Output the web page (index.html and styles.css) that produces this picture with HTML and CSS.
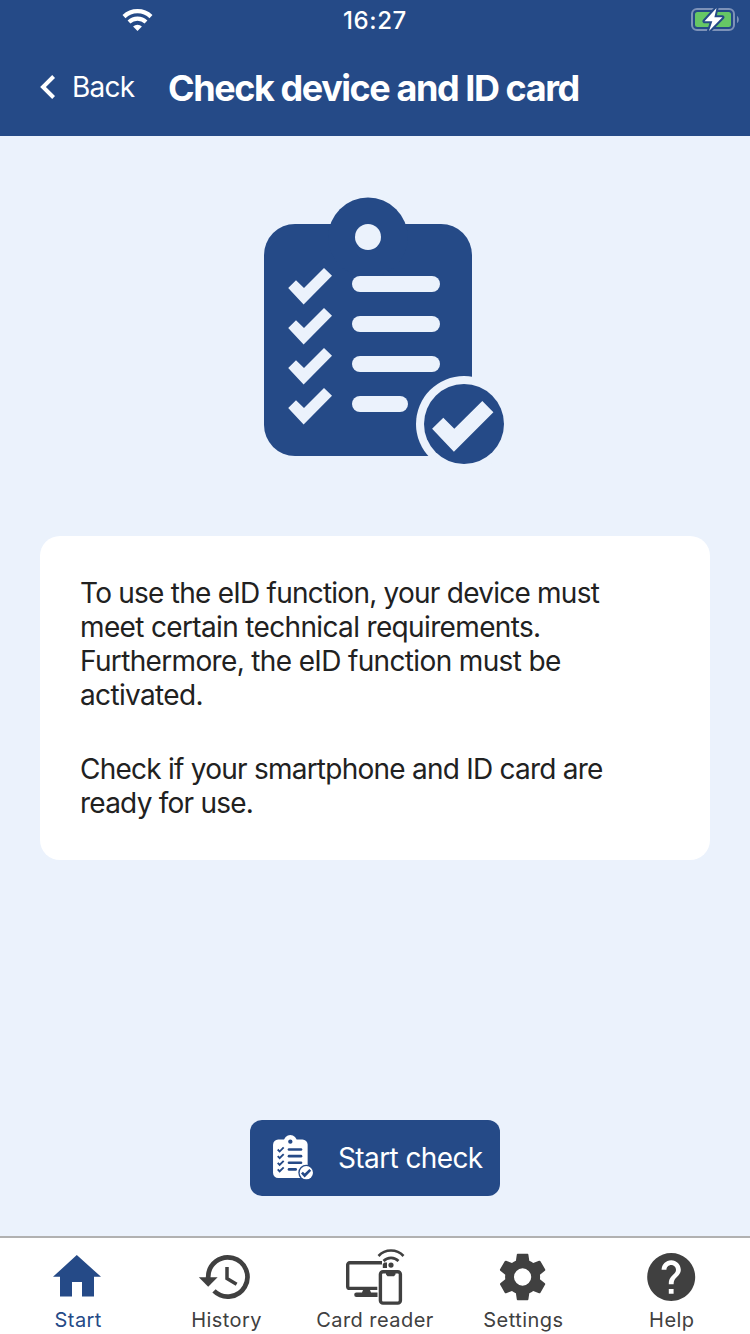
FILE: index.html
```html
<!DOCTYPE html>
<html lang="en">
<head>
<meta charset="utf-8">
<title>Check device and ID card</title>
<link rel="stylesheet" href="styles.css">
</head>
<body>
<svg class="sprite" width="0" height="0" aria-hidden="true">
  <symbol id="checklist" viewBox="264 197 240 268">
    <g fill="currentColor">
      <rect x="264" y="224" width="208" height="232" rx="31"/>
      <circle cx="368" cy="237.3" r="39.8"/>
    </g>
    <g fill="var(--cut)">
      <circle cx="368" cy="237" r="13"/>
      <path id="tick" d="M288.2 288l7.8-7.8 8 7.8 20-20 8 7.8-28.4 28.6z"/>
      <use href="#tick" y="40"/>
      <use href="#tick" y="80"/>
      <use href="#tick" y="120"/>
      <rect x="352" y="276" width="88" height="16" rx="8"/>
      <rect x="352" y="316" width="88" height="16" rx="8"/>
      <rect x="352" y="356" width="88" height="16" rx="8"/>
      <rect x="352" y="396" width="56" height="16" rx="8"/>
      <circle cx="464" cy="424" r="48"/>
    </g>
    <circle cx="464" cy="424" r="40" fill="currentColor"/>
    <path fill="var(--cut)" d="M432.1 428.8l11.2-11 11 11 28-27.8 11.1 11.3-39.5 39.5z"/>
  </symbol>
</svg>
<div class="screen">
  <header class="header">
    <div class="status">
      <svg class="wifi" width="32" height="24" viewBox="0 0 32 24" fill="none" stroke="#fff">
        <path d="M2 8.6a19.6 19.6 0 0 1 27 0" stroke-width="4.3"/>
        <path d="M7 14a12.4 12.4 0 0 1 17 0" stroke-width="4.1"/>
        <path d="M15.5 23l-4.4-4.4a6.4 6.4 0 0 1 8.8 0z" fill="#fff" stroke="none"/>
      </svg>
      <span class="time">16:27</span>
      <svg class="battery" width="50" height="26" viewBox="0 0 50 26">
        <rect x="2" y="2" width="42" height="21" rx="5" fill="none" stroke="#7d92b8" stroke-width="2"/>
        <rect x="5" y="5" width="36" height="15" rx="2.5" fill="#66c765"/>
        <path d="M47 9c2.4 1 2.4 6 0 7z" fill="#7d92b8"/>
        <path d="M26.5 1L14.5 14.2h7.8L19 24l13.4-13.7h-8z" fill="#fff" stroke="#254a87" stroke-width="4" stroke-linejoin="round" paint-order="stroke"/>
      </svg>
    </div>
    <div class="titlebar">
      <svg class="chevron" width="16" height="24" viewBox="0 0 16 24" fill="none" stroke="#fff" stroke-width="4"><path d="M13.6 1.5L3 12l10.6 10.5"/></svg>
      <span class="back">Back</span>
      <h1 class="title">Check device and ID card</h1>
    </div>
  </header>
  <main class="content">
    <svg class="hero"><use href="#checklist"/></svg>
    <section class="card">
      <p class="line l1"><span class="tight">To use the eID function, your device must</span><br>meet certain technical requirements.<br>Furthermore, the eID function must be<br>activated.</p>
      <p class="line tight">Check if your smartphone and ID card are<br>ready for use.</p>
    </section>
    <button class="action"><svg class="action-icon"><use href="#checklist"/></svg><span>Start check</span></button>
  </main>
  <nav class="tabs">
    <div class="tab active">
      <svg class="icon" viewBox="0 0 60 58"><path fill="currentColor" d="M24 48.6V34h10v14.6h12V28.8h7L28.8 7 5 28.8h7v19.8z"/></svg>
      <span>Start</span>
    </div>
    <div class="tab">
      <svg class="icon" viewBox="0 0 60 58" fill="none" stroke="currentColor"><path d="M11.2 30v-1a19.6 19.6 0 1 1 5.8 13.9" stroke-width="4.7"/><path d="M30 19v11.6l9.6 5.6" stroke-width="3.5"/><path d="M1.8 29.2h18.8l-9.4 9.6z" fill="currentColor" stroke="none"/></svg>
      <span>History</span>
    </div>
    <div class="tab">
      <svg class="icon" viewBox="0 0 60 58" fill="none" stroke="currentColor">
        <path d="M37 14.8H4.7a2 2 0 0 0-2 2v21.6a2 2 0 0 0 2 2H32.3" stroke-width="3.4"/>
        <path d="M18 42h7l1 2.5h6.5v4.4H11.4a2.2 2.2 0 0 1 0-4.4H17z" fill="currentColor" stroke="none"/>
        <rect x="35.4" y="23.7" width="20" height="31.4" rx="2.6" stroke-width="3.4"/>
        <path d="M41 24h9.5v2.5l-1.5 1.8h-6.5L41 26.5zM37.8 16l1.6-1.4H42V20h-4.2z" fill="currentColor" stroke="none"/>
        <circle cx="46" cy="17.1" r="2.6" fill="currentColor" stroke="none"/>
        <path d="M33.5 8a17 17 0 0 1 25 0M38.5 13a10.5 10.5 0 0 1 15 0" stroke-width="2.6"/>
      </svg>
      <span>Card reader</span>
    </div>
    <div class="tab">
      <svg class="icon" viewBox="0 0 60 58"><path fill="currentColor" transform="translate(1.6 1) scale(2.333)" d="M19.43 12.98c.04-.32.07-.64.07-.98s-.03-.66-.07-.98l2.11-1.65c.19-.15.24-.42.12-.64l-2-3.46c-.12-.22-.39-.3-.61-.22l-2.49 1c-.52-.4-1.08-.73-1.69-.98l-.38-2.65C14.46 2.18 14.25 2 14 2h-4c-.25 0-.46.18-.49.42l-.38 2.65c-.61.25-1.17.59-1.69.98l-2.49-1c-.23-.09-.49 0-.61.22l-2 3.46c-.13.22-.07.49.12.64l2.11 1.65c-.04.32-.07.65-.07.98s.03.66.07.98l-2.11 1.65c-.19.15-.24.42-.12.64l2 3.46c.12.22.39.3.61.22l2.49-1c.52.4 1.08.73 1.69.98l.38 2.65c.03.24.24.42.49.42h4c.25 0 .46-.18.49-.42l.38-2.65c.61-.25 1.17-.59 1.69-.98l2.49 1c.23.09.49 0 .61-.22l2-3.46c.12-.22.07-.49-.12-.64l-2.11-1.65zM12 15.7a3.7 3.7 0 1 1 0-7.4 3.7 3.7 0 0 1 0 7.4z"/></svg>
      <span>Settings</span>
    </div>
    <div class="tab">
      <svg class="icon" viewBox="0 0 60 58"><path fill="currentColor" transform="translate(.4 .2) scale(2.4)" d="M12 2C6.48 2 2 6.48 2 12s4.48 10 10 10 10-4.48 10-10S17.52 2 12 2zm1 17h-2v-2h2v2zm2.07-7.75l-.9.92C13.45 12.9 13 13.5 13 15h-2v-.5c0-1.1.45-2.1 1.17-2.83l1.24-1.26c.37-.36.59-.86.59-1.41 0-1.1-.9-2-2-2s-2 .9-2 2H8c0-2.21 1.79-4 4-4s4 1.79 4 4c0 .88-.36 1.68-.93 2.25z"/></svg>
      <span>Help</span>
    </div>
  </nav>
</div>
</body>
</html>
```
FILE: styles.css
```css
* { box-sizing: border-box; }
body { margin: 0; font-family: Inter, sans-serif; font-weight: 400; }
.sprite { display: block; }
.screen { width: 750px; height: 1334px; display: flex; flex-direction: column; background: #ebf2fc; overflow: hidden; }
.header { height: 136px; background: #254a87; color: #fff; }
.status { height: 40px; display: grid; grid-template-columns: 1fr auto 1fr; align-items: center; }
.wifi { margin-left: 122px; }
.time { font-size: 24px; font-weight: 500; letter-spacing: 0.6px; line-height: 38px; padding-top: 2px; }
.battery { justify-self: end; margin-right: 10px; }
.titlebar { height: 94px; display: flex; align-items: center; padding-left: 40px; white-space: nowrap; }
.back { width: 96px; padding-left: 16px; font-size: 28px; letter-spacing: -0.8px; }
.title { margin: 0 0 0 16px; font-size: 36px; font-weight: 700; letter-spacing: -1.43px; padding-top: 1px; }
.content { flex: 1; display: flex; flex-direction: column; align-items: center; color: #212121; }
.hero { width: 240px; height: 268px; margin: 61px 0 71px 18px; color: #254a87; --cut: #ebf2fc; flex: none; }
.card { width: 670px; height: 324px; padding: 40px; border-radius: 20px; background: #fff; }
.line { margin: 0; font-size: 28px; line-height: 34px; letter-spacing: -0.65px; white-space: nowrap; }
.tight, .line.tight { letter-spacing: -0.76px; }
.l1 { margin-bottom: 40px; }
.action { margin-top: auto; margin-bottom: 40px; width: 250px; height: 76px; padding: 0 0 0 23px; display: flex; align-items: center; gap: 25px; border: 0; border-radius: 12px; background: #254a87; color: #fff; font: inherit; font-size: 28px; letter-spacing: -0.6px; white-space: nowrap; }
.action-icon { width: 40px; height: 44.6px; flex: none; margin-top: -1px; --cut: #254a87; }
.tabs { height: 98px; padding: 0 4px; display: grid; grid-template-columns: repeat(5, 1fr); border-top: 2px solid #b1b1b1; background: #fff; color: #404040; font-size: 20px; letter-spacing: 0.45px; }
.tab { display: flex; flex-direction: column; align-items: center; padding-top: 10px; line-height: 28px; white-space: nowrap; }
.active { color: #254a87; }
.icon { width: 60px; height: 58px; flex: none; }
```
